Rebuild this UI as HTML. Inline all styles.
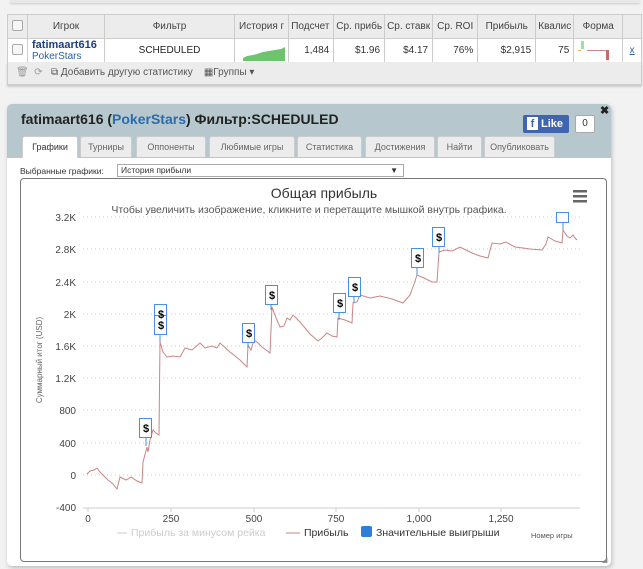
<!DOCTYPE html>
<html><head><meta charset="utf-8"><style>
*{box-sizing:border-box;margin:0;padding:0}
body{width:643px;height:569px;background:#f2f2f2;font-family:"Liberation Sans",sans-serif;position:relative;overflow:hidden;font-size:10px;color:#333}
.a{position:absolute}
table{border-collapse:collapse;position:absolute;left:7px;top:14px;width:635px;background:#fff}
td{border:1px solid #ccc;height:24px;font-size:10px;text-align:right;padding:0 4px;white-space:nowrap;overflow:hidden}
tr.h td{background:#ececec;color:#444;text-align:center;height:24px}
.cb{display:inline-block;width:11px;height:11px;border:1px solid #aaa;border-radius:2px;background:#f6f6f6}
.tab{position:absolute;top:136px;height:21px;background:#ececec;border:1px solid #ccc;border-bottom:none;border-radius:3px 3px 0 0;font-size:9px;color:#666;text-align:center;line-height:20px}
</style></head><body>
<div class="a" style="left:10px;top:0;width:630px;height:3px;background:#e8e8e8;box-shadow:0 1px 2px #ccc"></div>
<table>
<tr class="h"><td style="width:19px"><span class="cb"></span></td><td style="width:77px">Игрок</td><td style="width:130px">Фильтр</td><td style="width:52px;text-align:left">История г</td><td style="width:45px;text-align:left;padding:0 2px">Подсчет</td><td style="width:45px;text-align:left;padding:0 2px">Ср. прибь</td><td style="width:45px;text-align:left;padding:0 2px">Ср. ставк</td><td style="width:43px">Ср. ROI</td><td style="width:58px">Прибыль</td><td style="width:36px;text-align:left;padding:0 2px">Квалис</td><td style="width:49px">Форма</td><td></td></tr>
<tr><td><span class="cb"></span></td><td style="text-align:left;line-height:11px;font-size:11px"><b style="color:#1d3f7a">fatimaart616</b><br><span style="color:#2a5ea8;font-size:10px">PokerStars</span></td><td style="text-align:center;color:#222">SCHEDULED</td><td style="position:relative;padding:0"><svg width="52" height="24" style="position:absolute;left:0;top:0"><path d="M3,22 L3,21 M8,22 L8,19 L12,17 L18,16 L22,15 L28,13 L34,12 L40,11 L46,10 L50,8 L50,22 Z" fill="#6cc56c"/></svg></td><td>1,484</td><td>$1.96</td><td>$4.17</td><td>76%</td><td>$2,915</td><td>75</td><td style="position:relative;padding:0"><svg width="49" height="24" style="position:absolute;left:0;top:0"><rect x="7" y="2" width="3" height="8" fill="#9be39b"/><rect x="4" y="11" width="3" height="1" fill="#e8b060"/><rect x="13" y="11" width="20" height="1" fill="#c88"/><rect x="32" y="11" width="3" height="10" fill="#c86a6a"/></svg></td><td style="text-align:center"><u style="color:#2a5ea8">x</u></td></tr>
</table>
<div class="a" style="left:7px;top:62px;width:635px;height:23px;background:#ececec;border:1px solid #ccc;border-top:none;box-shadow:0 2px 2px #ccc;font-size:10px;color:#555;line-height:22px;padding-left:8px"><span style="color:#999">🗑&nbsp;&nbsp;⟳</span>&nbsp;&nbsp;&nbsp;⧉ Добавить другую статистику&nbsp;&nbsp;&nbsp;&nbsp;▦Группы ▾</div>

<div class="a" style="left:7px;top:104px;width:604px;height:462px;background:#fff;border-radius:5px;box-shadow:1px 2px 4px #bbb"></div>
<div class="a" style="left:7px;top:104px;width:604px;height:54px;background:#b6c8cd;border-radius:5px 5px 0 0"></div>
<div class="a" style="left:21px;top:111px;font-size:14px;font-weight:bold;color:#222">fatimaart616 (<span style="color:#2a6cae">PokerStars</span>) Фильтр:SCHEDULED</div>
<div class="a" style="left:523px;top:115px;width:46px;height:18px;background:#4164ae;border-radius:2px;color:#fff;font-weight:bold;font-size:11px;line-height:18px"><span style="display:inline-block;background:#fff;color:#4164ae;width:11px;height:13px;margin:2px 3px 0 4px;line-height:14px;text-align:center;vertical-align:top">f</span>Like</div>
<div class="a" style="left:575px;top:115px;width:20px;height:18px;background:#fff;border:1px solid #aaa;border-radius:2px;font-size:10px;text-align:center;line-height:16px">0</div>
<div class="a" style="left:600px;top:104px;font-size:11px;font-weight:bold;color:#222">✖</div>
<div class="tab" style="left:22px;width:56px;background:#fff;color:#333;height:22px">Графики</div>
<div class="tab" style="left:80px;width:52px">Турниры</div>
<div class="tab" style="left:136px;width:70px">Оппоненты</div>
<div class="tab" style="left:209px;width:86px">Любимые игры</div>
<div class="tab" style="left:297px;width:65px">Статистика</div>
<div class="tab" style="left:365px;width:70px">Достижения</div>
<div class="tab" style="left:437px;width:45px">Найти</div>
<div class="tab" style="left:484px;width:71px">Опубликовать</div>
<div class="a" style="left:20px;top:166px;font-size:8.5px;color:#333">Выбранные графики:</div>
<div class="a" style="left:117px;top:164px;width:287px;height:13px;border:1px solid #aaa;font-size:8.5px;padding-left:3px;line-height:11px">История прибыли<span style="position:absolute;right:5px;font-size:8px">▼</span></div>
<div class="a" style="left:20px;top:178px;width:587px;height:384px;border:1px solid #777;border-radius:4px"></div>
<div class="a" style="left:602px;top:556px;font-size:7px;color:#888">◢</div>

<svg class="a" style="left:0;top:0" width="643" height="569" font-family="Liberation Sans, sans-serif">
<text x="324" y="198" font-size="14" fill="#333" text-anchor="middle">Общая прибыль</text>
<text x="309" y="213" font-size="10.5" fill="#555" text-anchor="middle">Чтобы увеличить изображение, кликните и перетащите мышкой внутрь графика.</text>
<g fill="#666"><rect x="573" y="190" width="14" height="2.5"/><rect x="573" y="195" width="14" height="2.5"/><rect x="573" y="200" width="14" height="2.5"/></g>
<g stroke="#ccc" stroke-dasharray="1,3">
<line x1="83" x2="580" y1="217" y2="217"/><line x1="83" x2="580" y1="249" y2="249"/><line x1="83" x2="580" y1="282" y2="282"/><line x1="83" x2="580" y1="314" y2="314"/><line x1="83" x2="580" y1="346" y2="346"/><line x1="83" x2="580" y1="378" y2="378"/><line x1="83" x2="580" y1="410" y2="410"/><line x1="83" x2="580" y1="443" y2="443"/><line x1="83" x2="580" y1="475" y2="475"/></g>
<line x1="83" x2="580" y1="508" y2="508" stroke="#ccc"/>
<g stroke="#ccc"><line x1="88" x2="88" y1="508" y2="512"/><line x1="171" x2="171" y1="508" y2="512"/><line x1="254" x2="254" y1="508" y2="512"/><line x1="336" x2="336" y1="508" y2="512"/><line x1="419" x2="419" y1="508" y2="512"/><line x1="501" x2="501" y1="508" y2="512"/></g>
<g font-size="10" fill="#444" text-anchor="end"><text x="76" y="221">3.2K</text><text x="76" y="253">2.8K</text><text x="76" y="286">2.4K</text><text x="76" y="318">2K</text><text x="76" y="350">1.6K</text><text x="76" y="382">1.2K</text><text x="76" y="414">800</text><text x="76" y="447">400</text><text x="76" y="479">0</text><text x="76" y="511">-400</text></g>
<g font-size="10" fill="#444" text-anchor="middle"><text x="88" y="522">0</text><text x="171" y="522">250</text><text x="254" y="522">500</text><text x="336" y="522">750</text><text x="419" y="522">1,000</text><text x="501" y="522">1,250</text></g>
<text transform="translate(42,360) rotate(-90)" font-size="8" fill="#666" text-anchor="middle">Суммарный итог (USD)</text>
<polyline fill="none" stroke="#c98585" stroke-width="1" points="87,474 90,471 94,470 97,468 100,472 104,476 108,480 113,484 117,489 120,477 126,480 131,477 137,481 142,483 143,462 147,447 148,452 150,440 153,430 156,433 159,435 160,342 163,352 167,357 173,356 180,357 185,348 192,350 200,343 205,348 212,346 217,348 220,343 230,352 240,360 247,367 248,345 251,350 254,340 257,342 262,347 270,353 272,307 276,318 280,327 284,326 287,318 290,320 293,315 300,322 310,334 318,341 322,338 327,333 332,336 337,337 338,318 345,320 352,323 353,303 357,302 360,295 370,298 380,296 392,299 403,303 410,295 414,284 417,275 424,278 432,282 437,282 439,252 445,250 452,251 460,247 466,250 472,253 480,256 488,258 492,243 500,244 506,242 515,247 523,248 530,249 542,250 546,244 548,237 555,241 562,243 563,230 567,236 570,238 573,235 575,238 577,240"/>
<g fill="#fff" stroke="#4a8fe0" stroke-width="1"><line x1="146" y1="437" x2="146" y2="446" stroke="#4a8fe0"/><line x1="160" y1="333" x2="160" y2="342"/><line x1="248" y1="342" x2="248" y2="348"/><line x1="271" y1="305" x2="271" y2="310"/><line x1="339" y1="313" x2="339" y2="320"/><line x1="354" y1="296" x2="354" y2="303"/><line x1="417" y1="268" x2="417" y2="275"/><line x1="439" y1="247" x2="439" y2="253"/><line x1="563" y1="222" x2="563" y2="230"/>
<rect x="139.5" y="418.5" width="12" height="19"/><rect x="154.5" y="304.5" width="12" height="19"/><rect x="154.5" y="315.5" width="12" height="19"/><rect x="242.5" y="323.5" width="12" height="19"/><rect x="265.5" y="285.5" width="12" height="19"/><rect x="333.5" y="293.5" width="12" height="19"/><rect x="348.5" y="277.5" width="12" height="19"/><rect x="411.5" y="248.5" width="12" height="19"/><rect x="432.5" y="227.5" width="12" height="19"/><rect x="556.5" y="212.5" width="12" height="10"/></g>
<g font-size="11" font-weight="bold" fill="#000" text-anchor="middle"><text x="146" y="432">$</text><text x="161" y="318">$</text><text x="161" y="329">$</text><text x="249" y="337">$</text><text x="272" y="299">$</text><text x="340" y="307">$</text><text x="355" y="291">$</text><text x="418" y="262">$</text><text x="439" y="241">$</text></g>
<line x1="117" x2="127" y1="533" y2="533" stroke="#ccc"/><text x="131" y="536" font-size="10.5" fill="#ccc">Прибыль за минусом рейка</text>
<line x1="286" x2="300" y1="533" y2="533" stroke="#c98585"/><text x="304" y="536" font-size="10.5" fill="#333">Прибыль</text>
<rect x="361" y="526" width="11" height="11" rx="2" fill="#2f7ed8"/><text x="376" y="536" font-size="10.5" fill="#333">Значительные выигрыши</text>
<text x="531" y="538" font-size="7.5" fill="#555">Номер игры</text>
</svg>
</body></html>
